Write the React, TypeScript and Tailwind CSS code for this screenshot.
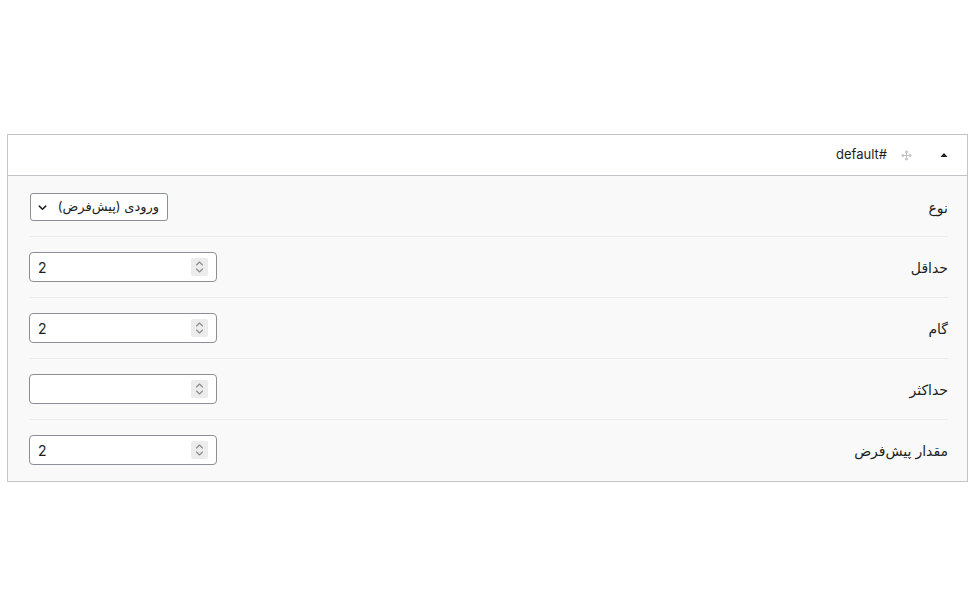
import React from "react";

const fontStack = { fontFamily: 'Inter, "DejaVu Sans", "Noto Sans", sans-serif' };

function Spinner() {
  return (
    <span className="flex h-[18px] w-[17px] items-center justify-center rounded-[2px] bg-[#ececec]">
      <svg width="9" height="14" viewBox="0 0 9 14" fill="none" stroke="#8a8a8a" strokeWidth="1.1" strokeLinecap="round" strokeLinejoin="round">
        <path d="M1.5 5 L4.5 2 L7.5 5" />
        <path d="M1.5 9 L4.5 12 L7.5 9" />
      </svg>
    </span>
  );
}

function NumberField({ value }: { value: string }) {
  return (
    <div className="flex h-[30px] w-[188px] items-center justify-between rounded-[4px] border border-[#8c8f94] bg-white pl-[8px] pr-[8px]" dir="ltr">
      <span className="text-[14px] text-[#1e1e1e]">{value}</span>
      <Spinner />
    </div>
  );
}

function Row({ label, children, last }: { label: string; children: React.ReactNode; last?: boolean }) {
  return (
    <div className={`flex items-center justify-between py-[15px] ${last ? "" : "border-b border-[#ececec]"}`}>
      <span className="text-[14px] text-[#1e1e1e]">{label}</span>
      {children}
    </div>
  );
}

export default function App() {
  return (
    <div className="min-h-[616px] w-[976px] bg-white pt-[134px] pl-[7px] pr-[8px]" style={fontStack} dir="rtl">
      <div className="border border-[#c3c4c7] bg-[#f9f9f9]">
        <div className="flex h-[41px] items-center border-b border-[#c3c4c7] bg-white pr-[18px]">
          <svg width="10" height="10" viewBox="0 0 10 10" className="ml-[27px]">
            <path d="M1.5 7 L5 3 L8.5 7 Z" fill="#1e1e1e" />
          </svg>
          <svg width="11" height="11" viewBox="0 0 11 11" fill="none" stroke="#c4c4c4" strokeWidth="1.2" className="ml-[14px]">
            <path d="M5.5 1 V10 M1 5.5 H10" />
            <path d="M4 2.5 L5.5 1 L7 2.5 M4 8.5 L5.5 10 L7 8.5 M2.5 4 L1 5.5 L2.5 7 M8.5 4 L10 5.5 L8.5 7" />
          </svg>
          <span className="text-[13px] text-[#1e1e1e]">#default</span>
        </div>
        <div className="pl-[21px] pr-[19px] pt-[2px] pb-px">
          <Row label="نوع">
            <div className="ml-[1px] flex h-[28px] w-[138px] items-center justify-between rounded-[3px] border border-[#8c8f94] bg-white pl-[6px] pr-[8px]">
              <span className="text-[13px] text-[#1e1e1e]">ورودی (پیش‌فرض)</span>
              <svg width="11" height="11" viewBox="0 0 12 12" fill="none" stroke="#1e1e1e" strokeWidth="1.6" strokeLinecap="round" strokeLinejoin="round">
                <path d="M2.5 4.5 L6 8 L9.5 4.5" />
              </svg>
            </div>
          </Row>
          <Row label="حداقل">
            <NumberField value="2" />
          </Row>
          <Row label="گام">
            <NumberField value="2" />
          </Row>
          <Row label="حداکثر">
            <NumberField value="" />
          </Row>
          <Row label="مقدار پیش‌فرض" last>
            <NumberField value="2" />
          </Row>
        </div>
      </div>
    </div>
  );
}
